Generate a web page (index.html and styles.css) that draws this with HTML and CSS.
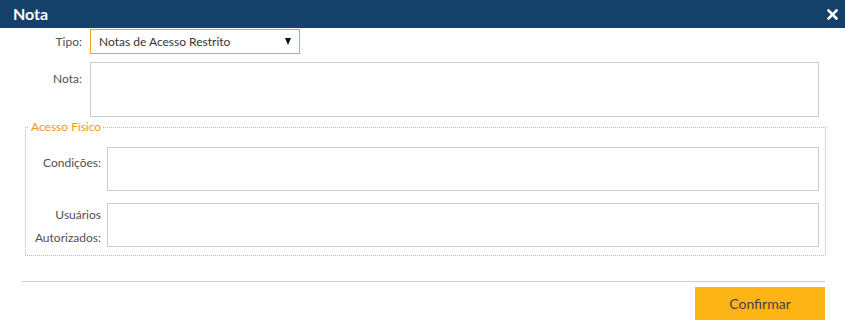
FILE: index.html
```html
<!DOCTYPE html>
<html lang="pt">
<head>
<meta charset="utf-8">
<title>Nota</title>
<link rel="stylesheet" href="styles.css">
</head>
<body>
<div class="dialog">
  <header class="titlebar">
    <span class="title">Nota</span>
    <span class="close" aria-label="Fechar">
      <svg width="11" height="11" viewBox="0 0 11 11"><path d="M1.5 1.5 L9.5 9.5 M9.5 1.5 L1.5 9.5" stroke="#fff" stroke-width="2.6" stroke-linecap="square"/></svg>
    </span>
  </header>
  <div class="form">
    <div class="row row-tipo">
      <label class="lbl lbl-mid">Tipo:</label>
      <div class="select">
        <span class="select-text">Notas de Acesso Restrito</span>
        <span class="select-arrow"></span>
      </div>
    </div>
    <div class="row row-nota">
      <label class="lbl lbl-top">Nota:</label>
      <textarea class="area area-nota"></textarea>
    </div>
  </div>
  <fieldset class="group">
    <legend class="legend">Acesso Físico</legend>
    <div class="group-grid">
      <label class="lbl lbl-cond">Condições:</label>
      <textarea class="area area-small"></textarea>
      <label class="lbl lbl-users">Usuários<br>Autorizados:</label>
      <textarea class="area area-small"></textarea>
    </div>
  </fieldset>
  <div class="separator"></div>
  <div class="actions">
    <button class="btn-confirm" type="button">Confirmar</button>
  </div>
</div>
</body>
</html>
```
FILE: styles.css
```css
* { box-sizing: border-box; }
html, body {
  margin: 0;
  padding: 0;
  background: #fff;
  font-family: "Lato", "Liberation Sans", sans-serif;
  font-size: 12px;
  color: #555;
}
.dialog {
  width: 845px;
  height: 334px;
  display: flex;
  flex-direction: column;
}
.titlebar {
  height: 28px;
  background: #15406a;
  display: flex;
  align-items: center;
  justify-content: space-between;
  padding: 0 7px 0 13px;
}
.title {
  color: #fff;
  font-weight: bold;
  font-size: 16px;
  line-height: 28px;
}
.close {
  display: flex;
  width: 11px;
  height: 11px;
  margin-top: 1px;
}
.form {
  display: flex;
  flex-direction: column;
  gap: 8px;
  padding-top: 1px;
  padding-right: 26px;
}
.row {
  display: grid;
  grid-template-columns: 82px 1fr;
  column-gap: 8px;
}
.row-tipo { align-items: center; }
.lbl {
  text-align: right;
  color: #505050;
  line-height: 16px;
}
.lbl-top { padding-top: 9px; }
.select {
  width: 210px;
  height: 25px;
  border: 1px solid #f2a51c;
  display: flex;
  align-items: center;
  justify-content: space-between;
  padding: 0 8px 0 8px;
  color: #333;
}
.select-arrow {
  width: 0;
  height: 0;
  border-left: 3.5px solid transparent;
  border-right: 3.5px solid transparent;
  border-top: 7px solid #111;
  margin-top: -1px;
}
.area {
  display: block;
  width: 100%;
  border: 1px solid #ccc;
  resize: none;
  margin: 0;
  padding: 4px;
  font: inherit;
  outline: none;
}
.area-nota { height: 55px; }
.area-small { height: 44px; }
.group {
  margin: 2px 19px 0 25px;
  padding: 12px 6px 6px 0;
  border: 1px dotted #bbb;
  min-width: 0;
}
.legend {
  color: #f7931e;
  font-size: 12px;
  line-height: 16px;
  padding: 0 2px;
  margin-left: 3px;
}
.group-grid {
  display: grid;
  grid-template-columns: 75px 1fr;
  column-gap: 6px;
  row-gap: 12px;
}
.lbl-cond { line-height: 23px; padding-top: 4px; }
.lbl-users { line-height: 23px; align-self: center; }
.separator {
  height: 1px;
  background: #ccc;
  margin: 25px 20px 0 22px;
}
.actions {
  display: flex;
  justify-content: flex-end;
  padding: 5px 20px 0 0;
}
.btn-confirm {
  width: 130px;
  height: 33px;
  border: none;
  background: #fdb415;
  color: #444;
  font-family: inherit;
  font-size: 14px;
  padding: 0;
  cursor: pointer;
}
```
